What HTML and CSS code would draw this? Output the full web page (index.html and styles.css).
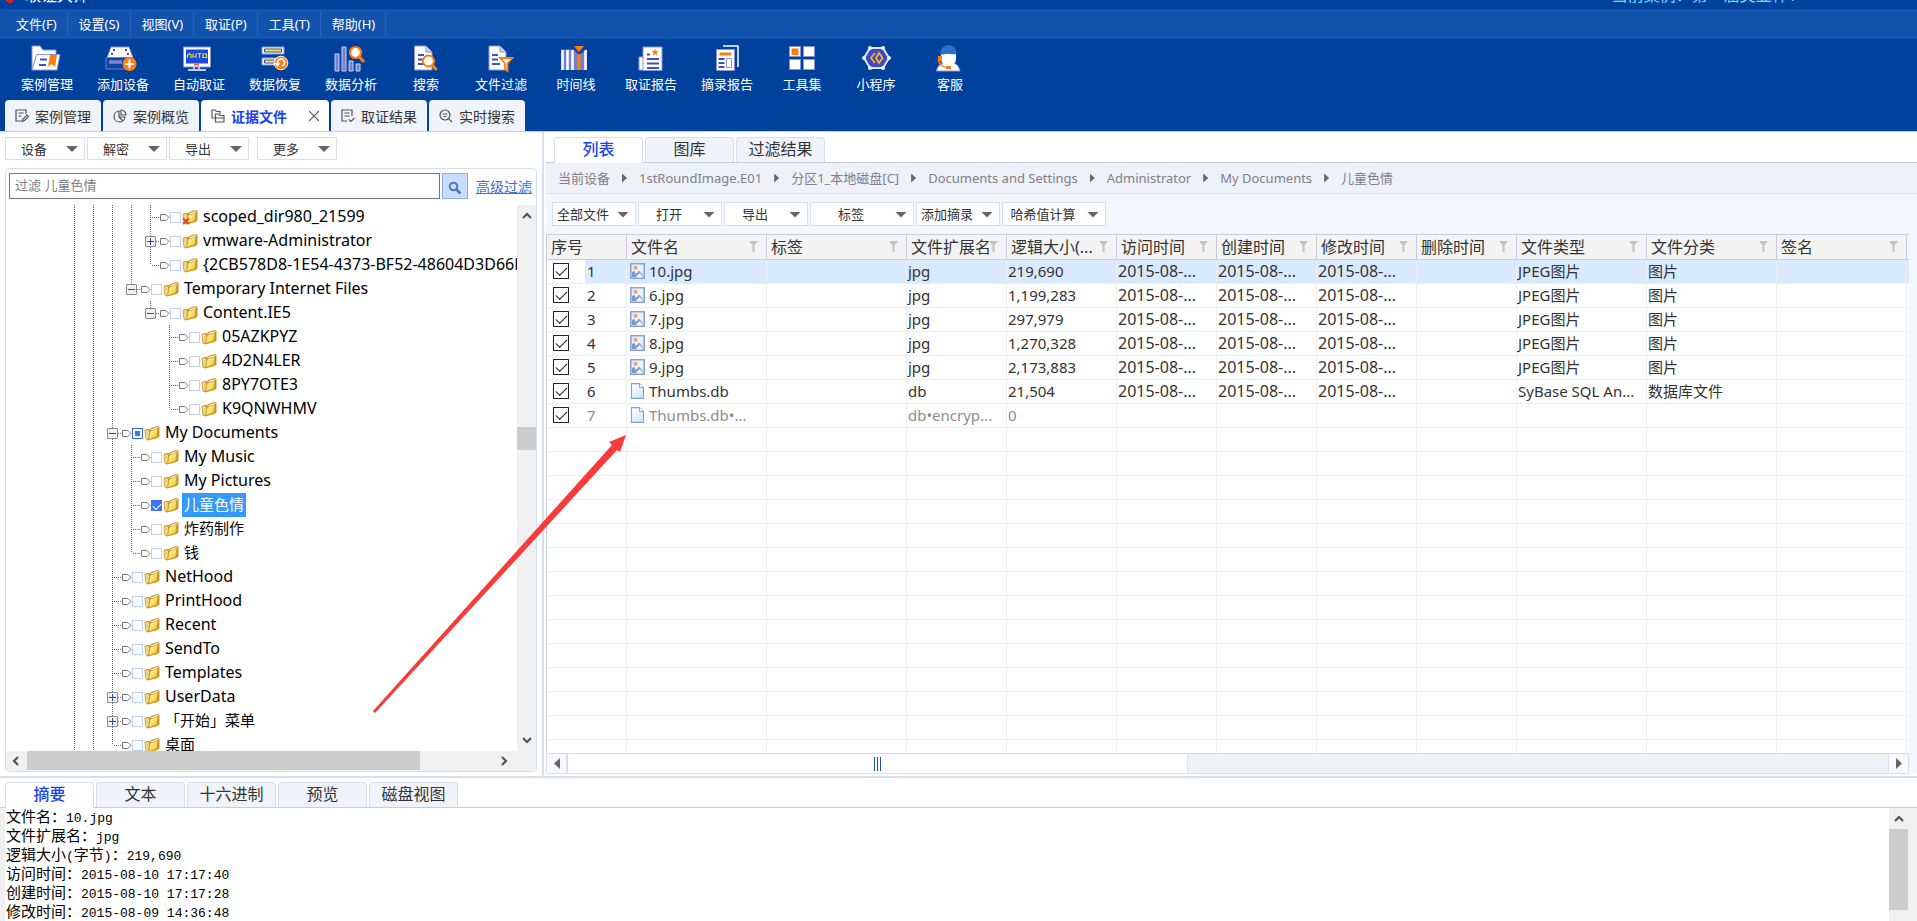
FILE: index.html
```html
<!DOCTYPE html>
<html lang="zh-CN">
<head>
<meta charset="utf-8">
<title>取证大师</title>
<link rel="stylesheet" href="styles.css">
</head>
<body>
<svg class="defs" aria-hidden="true">
  <defs>
    <linearGradient id="gold" x1="0" y1="0" x2="1" y2="1"><stop offset="0" stop-color="#fff8c8"/><stop offset=".5" stop-color="#f7e06a"/><stop offset="1" stop-color="#ecc010"/></linearGradient>
    <linearGradient id="sky" x1="0" y1="0" x2="1" y2="1"><stop offset="0" stop-color="#fff"/><stop offset="1" stop-color="#cfe3f7"/></linearGradient>
    <symbol id="folder" viewBox="0 0 16 16"><path d="M.5 5L4 3.800 6 4.500 7 3l6.500-2L15.500 2v9.500L13.500 13 4 15.500 1.500 14z" fill="#c9962a"/><path d="M1.300 5.500L4 4.800 5 6 4.500 14.300 2.300 13.600z" fill="#eed68a"/><path d="M7.500 4l6.500-2v1.500L7.500 5.500z" fill="#fffbe0"/><path d="M6 6.200L13.800 3.600 13 11.800 4.800 14.600z" fill="url(#gold)" stroke="#b98a1e" stroke-width=".5"/></symbol>
    <symbol id="folder-del" viewBox="0 0 16 16"><use href="#folder"/><path d="M1 9.500l6 5.500M7 9.500l-6 5.500" stroke="#e04a26" stroke-width="2.200"/></symbol>
    <symbol id="tag" viewBox="0 0 10 9"><path d="M.5 1.500h5.500l3 3-3 3H.5z" fill="#fff" stroke="#777"/></symbol>
    <symbol id="funnel" viewBox="0 0 9 11"><path d="M0 0h9L5.500 4.500V11h-2V4.500z" fill="#c2c2c2"/></symbol>
    <symbol id="pic" viewBox="0 0 15 16"><path d="M.8.8h13.400v14.400H.8z" fill="#e8f0fb" stroke="#8ba3d4" stroke-width="1.600"/><path d="M2 14V9l2-1 2 3 3-3.500 4 5V14z" fill="#7c9bd0"/><path d="M6 14l3.500-4 3.500 4z" fill="#fff"/><circle cx="5.500" cy="4.800" r="2" fill="#f0a070"/></symbol>
    <symbol id="doc" viewBox="0 0 15 16"><path d="M1.500.6h8l4 4v10.800h-12z" fill="url(#sky)" stroke="#79a6d6" stroke-width="1.100"/><path d="M9.500.6v4h4" fill="#fff" stroke="#79a6d6"/></symbol>
    <symbol id="up" viewBox="0 0 10 7"><path d="M1 6l4-4 4 4" fill="none" stroke="#555" stroke-width="2.200"/></symbol>
    <symbol id="down" viewBox="0 0 10 7"><path d="M1 1l4 4 4-4" fill="none" stroke="#555" stroke-width="2.200"/></symbol>
    <symbol id="left" viewBox="0 0 7 10"><path d="M6 1L2 5l4 4" fill="none" stroke="#555" stroke-width="2.200"/></symbol>
    <symbol id="right" viewBox="0 0 7 10"><path d="M1 1l4 4-4 4" fill="none" stroke="#555" stroke-width="2.200"/></symbol>
  </defs>
</svg>

<header class="top">
  <div class="titlebar">
    <svg class="logo" viewBox="0 0 10 4"><path d="M0 0h10L5 4z" fill="#d3202c"/></svg>
    <span class="app-name">取证大师</span>
    <span class="case-name">当前案例：第一届美亚杯1</span>
  </div>
  <nav class="menubar">
    <button>文件(F)</button><button>设置(S)</button><button>视图(V)</button><button>取证(P)</button><button>工具(T)</button><button>帮助(H)</button>
  </nav>
  <div class="toolbar">
    <button class="tool"><svg viewBox="0 0 30 28"><path d="M0 25V1h8l3 4h13v5" fill="#fff" stroke="#8a93dc"/><path d="M0 25L4.500 9.500H28L25 25z" fill="#fff" stroke="#8a93dc"/><path d="M8 14.500h7M7 20h7" stroke="#3a52d0" stroke-width="2"/><path d="M18 10h7l-2 12-3.500-3-3.500 3z" fill="#ff7d0a"/></svg>案例管理</button>
    <button class="tool"><svg viewBox="0 0 30 28"><path d="M3 2h18l4 11H-1z" fill="#fff" stroke="#8a93dc"/><path d="M5 5h2M17 5h2M3 9h2M19 9h2" stroke="#3a52d0" stroke-width="2"/><path d="M-2 12.500h26V24H-2z" fill="#12459f" stroke="#6f7ccc"/><path d="M1 17h13" stroke="#7d86d4" stroke-width="3.500"/><circle cx="21.500" cy="19" r="7" fill="#ff7d0a"/><path d="M21.500 14.500v9M17 19h9" stroke="#fff" stroke-width="2"/></svg>添加设备</button>
    <button class="tool"><svg viewBox="0 0 30 28"><path d="M-.5 2h27v20h-27z" fill="#fff" stroke="#8a93dc"/><path d="M2 4.500h22v14H2z" fill="#1a4be0"/><path d="M3.500 13v-3l2-1.500 1.500 1.500v3M9 8.500V12h3V8.500M13.500 8.500h4M15.500 8.500V13M19 9h3.500v3.500H19z" fill="none" stroke="#e4e032" stroke-width="1.200"/><path d="M10 19.500h5" stroke="#ff5a00" stroke-width="2"/><path d="M10 22v2.500M15 22v2.500M4 25h18" stroke="#c4caf2" stroke-width="1.800"/></svg>自动取证</button>
    <button class="tool"><svg viewBox="0 0 30 28"><path d="M2 2h22v7H2zM2 13h22v7H2z" fill="#fff" stroke="#8a93dc"/><path d="M4.500 4h17v3h-17zM4.500 15h10v3h-10z" fill="#f2ee3a" stroke="#3247a8"/><circle cx="21" cy="18" r="6.800" fill="#ff7d0a" stroke="#fff"/><path d="M17.500 20v-2.500a3.500 3.500 0 1 1 4.500 3.500M15.500 18l2 2.500 2-2.500" fill="none" stroke="#fff" stroke-width="1.700"/></svg>数据恢复</button>
    <button class="tool"><svg viewBox="0 0 30 28"><path d="M-1 9h4v17h-4zM6 2h4v24H6zM13 16h4v10h-4zM20 19h4v7h-4z" fill="#7580cc" stroke="#c9cdf3"/><circle cx="19.500" cy="7.500" r="5.500" fill="#fff" stroke="#ff7d0a" stroke-width="2.200"/><path d="M23.500 12l4.500 5" stroke="#ff7d0a" stroke-width="3"/></svg>数据分析</button>
    <button class="tool narrow"><svg viewBox="0 0 30 28"><path d="M3.500 1H15l6 6v18H3.500z" fill="#fff" stroke="#8a93dc"/><path d="M15 1v6h6" fill="#cdd3f5" stroke="#8a93dc"/><path d="M7 10h6M7 14.500h5M7 19h6" stroke="#3a52d0" stroke-width="1.800"/><circle cx="17.500" cy="16" r="5.500" fill="#fff" stroke="#ff7d0a" stroke-width="2"/><path d="M21.500 20l4 5" stroke="#ff7d0a" stroke-width="3"/></svg>搜索</button>
    <button class="tool"><svg viewBox="0 0 30 28"><path d="M3 1h11l6 6v18H3z" fill="#fff" stroke="#8a93dc"/><path d="M14 1v6h6" fill="#cdd3f5" stroke="#8a93dc"/><path d="M6 10h6M6 14.500h6M6 19h8" stroke="#3a52d0" stroke-width="1.800"/><path d="M14 13h12.500l-5 5.500V26l-2.500-1.500v-6z" fill="#fff" stroke="#ff7d0a" stroke-width="1.800"/></svg>文件过滤</button>
    <button class="tool narrow"><svg viewBox="0 0 30 28"><path d="M0 4.500h26v20.500H0z" fill="#7580cc"/><path d="M1.500 5v20M6.500 5v20M11.500 5v20M24.500 5v20" stroke="#fff" stroke-width="2.500"/><path d="M18 9v16" stroke="#ff7d0a" stroke-width="3"/><path d="M12 1h13v3l-5 5h-3l-5-5z" fill="#12459f"/><path d="M13 1h10l-5 6z" fill="#ff7d0a"/></svg>时间线</button>
    <button class="tool"><svg viewBox="0 0 30 28"><path d="M3 12h6v13H3z" fill="#fff" stroke="#8a93dc"/><path d="M7 2h19v23.500H7z" fill="#fff" stroke="#8a93dc"/><path d="M19 3.500l1 2.500h2.500l-2 1.800.8 2.600-2.300-1.500-2.300 1.500.8-2.600-2-1.800H18z" fill="#ff7d0a"/><path d="M11 9.500h3M11 14h12M11 18.500h12M11 23h12" stroke="#3a52d0" stroke-width="1.800"/></svg>取证报告</button>
    <button class="tool"><svg viewBox="0 0 30 28"><path d="M11 1h15v21" fill="none" stroke="#fff" stroke-width="1.500"/><path d="M4.500 4.500h18v21h-18z" fill="#fff" stroke="#8a93dc"/><path d="M7.500 9h12" stroke="#ff7d0a" stroke-width="3"/><path d="M6.500 14h6M6.500 18h6M6.500 22h6" stroke="#3a52d0" stroke-width="1.800"/><path d="M14.500 13.500h5v9h-5z" fill="#fff" stroke="#8a93dc"/></svg>摘录报告</button>
    <button class="tool narrow"><svg viewBox="0 0 30 28"><path d="M2.500 1.500h11v10h-11zM16.500 1.500h11v10h-11zM2.500 14.500h11v10h-11zM16.500 14.500h11v10h-11z" fill="#fff" stroke="#8a93dc"/><path d="M4.500 3.500h7v6.500h-7z" fill="#ff7d0a"/></svg>工具集</button>
    <button class="tool narrow"><svg viewBox="0 0 30 28"><path d="M9 3h13l6 10-6 10H9L3 13z" fill="#3a48cf" stroke="#dfe9ff" stroke-width="2"/><g fill="#e6fbff"><circle cx="9" cy="3" r="2"/><circle cx="22" cy="3" r="2"/><circle cx="28" cy="13" r="2"/><circle cx="22" cy="23" r="2"/><circle cx="9" cy="23" r="2"/><circle cx="3" cy="13" r="2"/></g><path d="M14 8l-4 5 4 5M18 8l-3 5 3 5 3.500-5z" fill="none" stroke="#ffb01a" stroke-width="1.800"/></svg>小程序</button>
    <button class="tool narrow"><svg viewBox="0 0 30 28"><path d="M1.500 26c1-6 5-7.500 7.500-8h9c3 .5 6 3 7 8z" fill="#fff" stroke="#8a93dc"/><path d="M6 8h15v6c0 4-3 6-7.500 6S6 18 6 14z" fill="#fff"/><path d="M5.500 10C5 3.500 9 0 13.500 0S22 3.500 21.500 9c-6 1-9-1-16 1z" fill="#2f6fc8"/><path d="M3.500 14c0 6 5 8.500 9 8.500" fill="none" stroke="#ff7d0a" stroke-width="1.500"/><path d="M3 11h4v5H3zM11 21h5v3h-5z" fill="#ff7d0a"/></svg>客服</button>
  </div>
  <nav class="page-tabs">
    <button class="page-tab"><svg viewBox="0 0 14 14"><path d="M11 5V1H1v11h5M3.500 4h5M3.500 7h3M7 12.500l1-2.500 4-4 1.500 1.500-4 4z"/></svg>案例管理</button>
    <button class="page-tab"><svg viewBox="0 0 14 14"><path d="M6 2a5.500 5.500 0 1 0 6 6H6zM8 1v5h5a5 5 0 0 0-5-5zM6 8l4 4"/></svg>案例概览</button>
    <button class="page-tab current"><svg viewBox="0 0 14 14"><path d="M4 9H1V1h3l1.500 1.500H9V5M4.500 5h3L9 6.500h4V13H4.500zM4.500 9H13"/></svg><span>证据文件</span><svg class="close" viewBox="0 0 10 10"><path d="M0 0l10 10M10 0L0 10"/></svg></button>
    <button class="page-tab"><svg viewBox="0 0 14 14"><path d="M11 7V1H1v11h5M3.500 4h5M3.500 7h5M8 10.500l2 2 3.500-3.500"/></svg>取证结果</button>
    <button class="page-tab"><svg viewBox="0 0 14 14"><circle cx="6" cy="6" r="5"/><path d="M9.500 9.500L13 13M3.500 5h5M4.500 7.500h3"/></svg>实时搜索</button>
  </nav>
</header>

<main class="work">
  <section class="left">
    <div class="actions">
      <button class="drop"><span>设备</span></button><button class="drop"><span>解密</span></button><button class="drop"><span>导出</span></button><button class="drop spaced"><span>更多</span></button>
    </div>
    <div class="panel">
      <form class="filter">
        <input class="filter-box" type="text" placeholder="过滤 儿童色情" aria-label="过滤">
        <button class="filter-go" type="button" aria-label="搜索"><svg viewBox="0 0 14 14"><circle cx="5.500" cy="5.500" r="3.800" fill="none" stroke="#5079b8" stroke-width="2"/><path d="M8.500 8.500l4 4" stroke="#5079b8" stroke-width="2.600"/></svg></button>
        <a class="advanced" href="#advanced">高级过滤</a>
      </form>
      <div class="tree-area">
        <ul class="tree">
          <li><i class="v"></i><i class="v"></i><i class="v"></i><i class="v"></i><i class="v t"></i><svg class="tag"><use href="#tag"/></svg><input type="checkbox" id="n1"><svg class="fold"><use href="#folder-del"/></svg><label for="n1">scoped_dir980_21599</label></li>
          <li><i class="v"></i><i class="v"></i><i class="v"></i><i class="v"></i><i class="v t"><b class="plus"></b></i><svg class="tag"><use href="#tag"/></svg><input type="checkbox" id="n2"><svg class="fold"><use href="#folder"/></svg><label for="n2">vmware-Administrator</label></li>
          <li><i class="v"></i><i class="v"></i><i class="v"></i><i class="v"></i><i class="v t end"></i><svg class="tag"><use href="#tag"/></svg><input type="checkbox" id="n3"><svg class="fold"><use href="#folder"/></svg><label for="n3">{2CB578D8-1E54-4373-BF52-48604D3D66E0}</label></li>
          <li><i class="v"></i><i class="v"></i><i class="v"></i><i class="v t end"><b></b></i><svg class="tag"><use href="#tag"/></svg><input type="checkbox" id="n4"><svg class="fold"><use href="#folder"/></svg><label for="n4">Temporary Internet Files</label></li>
          <li><i class="v"></i><i class="v"></i><i class="v"></i><i></i><i class="v t end"><b></b></i><svg class="tag"><use href="#tag"/></svg><input type="checkbox" id="n5"><svg class="fold"><use href="#folder"/></svg><label for="n5">Content.IE5</label></li>
          <li><i class="v"></i><i class="v"></i><i class="v"></i><i></i><i></i><i class="v t"></i><svg class="tag"><use href="#tag"/></svg><input type="checkbox" id="n6"><svg class="fold"><use href="#folder"/></svg><label for="n6">05AZKPYZ</label></li>
          <li><i class="v"></i><i class="v"></i><i class="v"></i><i></i><i></i><i class="v t"></i><svg class="tag"><use href="#tag"/></svg><input type="checkbox" id="n7"><svg class="fold"><use href="#folder"/></svg><label for="n7">4D2N4LER</label></li>
          <li><i class="v"></i><i class="v"></i><i class="v"></i><i></i><i></i><i class="v t"></i><svg class="tag"><use href="#tag"/></svg><input type="checkbox" id="n8"><svg class="fold"><use href="#folder"/></svg><label for="n8">8PY7OTE3</label></li>
          <li><i class="v"></i><i class="v"></i><i class="v"></i><i></i><i></i><i class="v t end"></i><svg class="tag"><use href="#tag"/></svg><input type="checkbox" id="n9"><svg class="fold"><use href="#folder"/></svg><label for="n9">K9QNWHMV</label></li>
          <li><i class="v"></i><i class="v"></i><i class="v t"><b></b></i><svg class="tag"><use href="#tag"/></svg><input class="partial" type="checkbox" id="n10"><svg class="fold"><use href="#folder"/></svg><label for="n10">My Documents</label></li>
          <li><i class="v"></i><i class="v"></i><i class="v"></i><i class="v t"></i><svg class="tag"><use href="#tag"/></svg><input type="checkbox" id="n11"><svg class="fold"><use href="#folder"/></svg><label for="n11">My Music</label></li>
          <li><i class="v"></i><i class="v"></i><i class="v"></i><i class="v t"></i><svg class="tag"><use href="#tag"/></svg><input type="checkbox" id="n12"><svg class="fold"><use href="#folder"/></svg><label for="n12">My Pictures</label></li>
          <li class="han picked"><i class="v"></i><i class="v"></i><i class="v"></i><i class="v t"></i><svg class="tag"><use href="#tag"/></svg><input type="checkbox" id="n13" checked><svg class="fold"><use href="#folder"/></svg><label for="n13">儿童色情</label></li>
          <li class="han"><i class="v"></i><i class="v"></i><i class="v"></i><i class="v t"></i><svg class="tag"><use href="#tag"/></svg><input type="checkbox" id="n14"><svg class="fold"><use href="#folder"/></svg><label for="n14">炸药制作</label></li>
          <li class="han"><i class="v"></i><i class="v"></i><i class="v"></i><i class="v t end"></i><svg class="tag"><use href="#tag"/></svg><input type="checkbox" id="n15"><svg class="fold"><use href="#folder"/></svg><label for="n15">钱</label></li>
          <li><i class="v"></i><i class="v"></i><i class="v t"></i><svg class="tag"><use href="#tag"/></svg><input type="checkbox" id="n16"><svg class="fold"><use href="#folder"/></svg><label for="n16">NetHood</label></li>
          <li><i class="v"></i><i class="v"></i><i class="v t"></i><svg class="tag"><use href="#tag"/></svg><input type="checkbox" id="n17"><svg class="fold"><use href="#folder"/></svg><label for="n17">PrintHood</label></li>
          <li><i class="v"></i><i class="v"></i><i class="v t"></i><svg class="tag"><use href="#tag"/></svg><input type="checkbox" id="n18"><svg class="fold"><use href="#folder"/></svg><label for="n18">Recent</label></li>
          <li><i class="v"></i><i class="v"></i><i class="v t"></i><svg class="tag"><use href="#tag"/></svg><input type="checkbox" id="n19"><svg class="fold"><use href="#folder"/></svg><label for="n19">SendTo</label></li>
          <li><i class="v"></i><i class="v"></i><i class="v t"></i><svg class="tag"><use href="#tag"/></svg><input type="checkbox" id="n20"><svg class="fold"><use href="#folder"/></svg><label for="n20">Templates</label></li>
          <li><i class="v"></i><i class="v"></i><i class="v t"><b class="plus"></b></i><svg class="tag"><use href="#tag"/></svg><input type="checkbox" id="n21"><svg class="fold"><use href="#folder"/></svg><label for="n21">UserData</label></li>
          <li class="han"><i class="v"></i><i class="v"></i><i class="v t"><b class="plus"></b></i><svg class="tag"><use href="#tag"/></svg><input type="checkbox" id="n22"><svg class="fold"><use href="#folder"/></svg><label for="n22">「开始」菜单</label></li>
          <li class="han"><i class="v"></i><i class="v"></i><i class="v t end"></i><svg class="tag"><use href="#tag"/></svg><input type="checkbox" id="n23"><svg class="fold"><use href="#folder"/></svg><label for="n23">桌面</label></li>
        </ul>
        <div class="vbar"><button aria-label="向上"><svg class="chev-v"><use href="#up"/></svg></button><div class="vtrack"><div class="vthumb"></div></div><button aria-label="向下"><svg class="chev-v"><use href="#down"/></svg></button></div>
      </div>
      <div class="hbar"><button aria-label="向左"><svg class="chev-h"><use href="#left"/></svg></button><div class="htrack"><div class="hthumb"></div></div><button aria-label="向右"><svg class="chev-h"><use href="#right"/></svg></button></div>
    </div>
  </section>

  <section class="right">
    <nav class="tabs">
      <button class="tab current">列表</button><button class="tab">图库</button><button class="tab">过滤结果</button>
    </nav>
    <nav class="crumbs">
      <a href="#c1">当前设备</a><a href="#c2">1stRoundImage.E01</a><a href="#c3">分区1_本地磁盘[C]</a><a href="#c4">Documents and Settings</a><a href="#c5">Administrator</a><a href="#c6">My Documents</a><a href="#c7">儿童色情</a>
    </nav>
    <div class="list-actions">
      <button class="drop"><span>全部文件</span></button><button class="drop"><span>打开</span></button><button class="drop"><span>导出</span></button><button class="drop wide"><span>标签</span></button><button class="drop"><span>添加摘录</span></button><button class="drop wide"><span>哈希值计算</span></button>
    </div>
    <div class="grid-area">
      <table class="files">
        <colgroup><col class="c80"><col class="c140"><col class="c140"><col class="c100"><col class="c110"><col class="c100"><col class="c100"><col class="c100"><col class="c100"><col class="c130"><col class="c130"><col class="c130"><col></colgroup>
        <thead><tr>
          <th>序号</th>
          <th>文件名<svg class="fun"><use href="#funnel"/></svg></th>
          <th>标签<svg class="fun"><use href="#funnel"/></svg></th>
          <th>文件扩展名<svg class="fun"><use href="#funnel"/></svg></th>
          <th>逻辑大小(...<svg class="fun"><use href="#funnel"/></svg></th>
          <th>访问时间<svg class="fun"><use href="#funnel"/></svg></th>
          <th>创建时间<svg class="fun"><use href="#funnel"/></svg></th>
          <th>修改时间<svg class="fun"><use href="#funnel"/></svg></th>
          <th>删除时间<svg class="fun"><use href="#funnel"/></svg></th>
          <th>文件类型<svg class="fun"><use href="#funnel"/></svg></th>
          <th>文件分类<svg class="fun"><use href="#funnel"/></svg></th>
          <th>签名<svg class="fun"><use href="#funnel"/></svg></th>
          <th></th>
        </tr></thead>
        <tbody>
          <tr class="active"><td><label class="num"><input type="checkbox" checked>1</label></td><td><span class="name"><svg><use href="#pic"/></svg>10.jpg</span></td><td></td><td>jpg</td><td>219,690</td><td class="date">2015-08-...</td><td class="date">2015-08-...</td><td class="date">2015-08-...</td><td></td><td>JPEG图片</td><td>图片</td><td></td><td></td></tr>
          <tr><td><label class="num"><input type="checkbox" checked>2</label></td><td><span class="name"><svg><use href="#pic"/></svg>6.jpg</span></td><td></td><td>jpg</td><td>1,199,283</td><td class="date">2015-08-...</td><td class="date">2015-08-...</td><td class="date">2015-08-...</td><td></td><td>JPEG图片</td><td>图片</td><td></td><td></td></tr>
          <tr><td><label class="num"><input type="checkbox" checked>3</label></td><td><span class="name"><svg><use href="#pic"/></svg>7.jpg</span></td><td></td><td>jpg</td><td>297,979</td><td class="date">2015-08-...</td><td class="date">2015-08-...</td><td class="date">2015-08-...</td><td></td><td>JPEG图片</td><td>图片</td><td></td><td></td></tr>
          <tr><td><label class="num"><input type="checkbox" checked>4</label></td><td><span class="name"><svg><use href="#pic"/></svg>8.jpg</span></td><td></td><td>jpg</td><td>1,270,328</td><td class="date">2015-08-...</td><td class="date">2015-08-...</td><td class="date">2015-08-...</td><td></td><td>JPEG图片</td><td>图片</td><td></td><td></td></tr>
          <tr><td><label class="num"><input type="checkbox" checked>5</label></td><td><span class="name"><svg><use href="#pic"/></svg>9.jpg</span></td><td></td><td>jpg</td><td>2,173,883</td><td class="date">2015-08-...</td><td class="date">2015-08-...</td><td class="date">2015-08-...</td><td></td><td>JPEG图片</td><td>图片</td><td></td><td></td></tr>
          <tr><td><label class="num"><input type="checkbox" checked>6</label></td><td><span class="name"><svg><use href="#doc"/></svg>Thumbs.db</span></td><td></td><td>db</td><td>21,504</td><td class="date">2015-08-...</td><td class="date">2015-08-...</td><td class="date">2015-08-...</td><td></td><td>SyBase SQL An...</td><td>数据库文件</td><td></td><td></td></tr>
          <tr class="dim"><td><label class="num"><input type="checkbox" checked>7</label></td><td><span class="name"><svg><use href="#doc"/></svg>Thumbs.db•...</span></td><td></td><td>db•encryp...</td><td>0</td><td></td><td></td><td></td><td></td><td></td><td></td><td></td><td></td></tr>
          <tr><td><td><td><td><td><td><td><td><td><td><td><td><td></tr>
          <tr><td><td><td><td><td><td><td><td><td><td><td><td><td></tr>
          <tr><td><td><td><td><td><td><td><td><td><td><td><td><td></tr>
          <tr><td><td><td><td><td><td><td><td><td><td><td><td><td></tr>
          <tr><td><td><td><td><td><td><td><td><td><td><td><td><td></tr>
          <tr><td><td><td><td><td><td><td><td><td><td><td><td><td></tr>
          <tr><td><td><td><td><td><td><td><td><td><td><td><td><td></tr>
          <tr><td><td><td><td><td><td><td><td><td><td><td><td><td></tr>
          <tr><td><td><td><td><td><td><td><td><td><td><td><td><td></tr>
          <tr><td><td><td><td><td><td><td><td><td><td><td><td><td></tr>
          <tr><td><td><td><td><td><td><td><td><td><td><td><td><td></tr>
          <tr><td><td><td><td><td><td><td><td><td><td><td><td><td></tr>
          <tr><td><td><td><td><td><td><td><td><td><td><td><td><td></tr>
          <tr><td><td><td><td><td><td><td><td><td><td><td><td><td></tr>
        </tbody>
      </table>
    </div>
    <div class="list-scroll">
      <button aria-label="向左"><svg viewBox="0 0 6 11"><path d="M6 0v11L0 5.500z" fill="#666"/></svg></button>
      <div class="list-track"><div class="list-thumb"><i></i><i></i><i></i></div></div>
      <button aria-label="向右"><svg viewBox="0 0 6 11"><path d="M0 0v11l6-5.500z" fill="#666"/></svg></button>
    </div>
  </section>
</main>

<section class="bottom">
  <nav class="tabs">
    <button class="tab current">摘要</button><button class="tab">文本</button><button class="tab">十六进制</button><button class="tab">预览</button><button class="tab">磁盘视图</button>
  </nav>
  <div class="summary">
    <div class="lines">
      <p>文件名：<code>10.jpg</code></p>
      <p>文件扩展名：<code>jpg</code></p>
      <p>逻辑大小<code>(</code>字节<code>)</code>：<code>219,690</code></p>
      <p>访问时间：<code>2015-08-10 17:17:40</code></p>
      <p>创建时间：<code>2015-08-10 17:17:28</code></p>
      <p>修改时间：<code>2015-08-09 14:36:48</code></p>
    </div>
    <div class="vbar"><button aria-label="向上"><svg class="chev-v"><use href="#up"/></svg></button><div class="vtrack"><div class="vthumb"></div></div></div>
  </div>
</section>

<svg class="pointer" width="640" height="720" aria-hidden="true"><path d="M373 711L612 445 609 442 626 435 620 452 617 450 375 713z" fill="#f93a3a"/></svg>
</body>
</html>
```
FILE: styles.css
```css
* { box-sizing: border-box; }
body {
  margin: 0;
  height: 100vh;
  display: flex;
  flex-direction: column;
  overflow: hidden;
  background: #fff;
  color: #333;
  font-family: "Noto Sans", "Noto Sans CJK SC", sans-serif;
  font-size: 15px;
}
button { font: inherit; color: inherit; background: none; border: 0; padding: 0; margin: 0; }
ul, p { margin: 0; padding: 0; }
.defs { position: absolute; width: 0; height: 0; }

/* header */
.top { flex: none; background: #00419d; color: #fff; border-bottom: 1px solid #c8cce0; }
.titlebar { height: 9px; overflow: hidden; display: flex; align-items: flex-start; font-size: 16px; padding: 0 120px 0 5px; }
.titlebar span { line-height: 16px; margin-top: -13px; }
.logo { width: 10px; height: 4px; margin-right: 10px; }
.case-name { margin-left: auto; color: #6fe0ff; }
.menubar { height: 30px; background: #1253ae; display: flex; align-items: center; padding-left: 5px; font-size: 13px; }
.menubar button { height: 26px; padding: 0 10px 0 11px; border-right: 1px solid #2564bb; line-height: 24px; }
.toolbar { height: 61px; display: flex; padding: 6px 0 0 9px; font-size: 13px; }
.tool { width: 76px; display: flex; flex-direction: column; align-items: center; gap: 2px; line-height: 18px; }
.tool.narrow { width: 74px; }
.tool svg { width: 30px; height: 28px; overflow: visible; }
.page-tabs { display: flex; gap: 2px; padding-left: 5px; font-size: 14px; color: #333; }
.page-tab { width: 96px; height: 31px; background: #f0f3f9; border-radius: 4px 4px 0 0; display: flex; align-items: center; gap: 6px; padding-left: 10px; }
.page-tab svg { width: 14px; height: 14px; fill: none; stroke: #555; stroke-width: 1.200; }
.page-tab.current { width: 128px; background: #fff; color: #1b44f0; font-weight: bold; }
.page-tab .close { width: 10px; height: 10px; margin-left: 16px; }

/* work area */
.work { flex: 1; min-height: 0; display: flex; border-bottom: 2px solid #d5dff0; }
.left { flex: none; width: 544px; padding: 5px 5px 4px; display: flex; flex-direction: column; gap: 8px; border-right: 2px solid #d5dff0; }
.actions { display: flex; gap: 2px; }
.drop { width: 80px; height: 23px; border: 1px solid #d5dff0; background: #fff; font-size: 13px; line-height: 18px; display: flex; align-items: center; }
.drop span { flex: 1; text-align: center; white-space: nowrap; }
.drop::after { content: ""; width: 12px; height: 6px; margin: 1px 6px 0 4px; background: #666; clip-path: polygon(0 0, 100% 0, 50% 100%); }
.drop.spaced { margin-left: 6px; }
.panel { flex: 1; min-height: 0; width: 532px; border: 1px solid #d5dff0; border-radius: 4px; display: flex; flex-direction: column; }
.filter { display: flex; align-items: center; padding: 4px 2px 6px 3px; }
.filter-box { flex: 1; min-width: 0; height: 26px; border: 1px solid #777; padding: 0 5px 2px; font: 13px "Noto Sans", "Noto Sans CJK SC", sans-serif; }
.filter-box::placeholder { color: #808080; }
.filter-go { width: 26px; height: 26px; margin: 0 8px 0 2px; border: 1px solid #90b0dc; background: #c8deff; }
.filter-go svg { width: 14px; height: 14px; vertical-align: middle; }
.advanced { font-size: 14px; color: #3b6fd8; margin-right: 2px; }

.tree-area { flex: 1; min-height: 0; display: flex; }
.tree { flex: 1; min-width: 0; list-style: none; padding-left: 59px; overflow: hidden; color: #000; font-size: 16px; }
.tree li { height: 24px; display: flex; align-items: center; white-space: nowrap; }
.tree .han { font-size: 15px; }
.tree i { flex: none; width: 19px; height: 24px; position: relative; }
.tree .v::before { content: ""; position: absolute; left: 9px; top: 0; bottom: 0; width: 1px; background: repeating-linear-gradient(180deg, #666 0 1px, #fff 1px 2px); }
.tree .end::before { bottom: 12px; }
.tree .t::after { content: ""; position: absolute; left: 10px; right: 0; top: 12px; height: 1px; background: repeating-linear-gradient(90deg, #fff 0 1px, #666 1px 2px); }
.tree b { position: absolute; z-index: 1; left: 4px; top: 7px; width: 11px; height: 11px; border: 1px solid #8a8a8a; border-radius: 1px; background: linear-gradient(#2a4c9c, #2a4c9c) center / 7px 1px no-repeat, #f0f0f0; }
.tree .plus { background: linear-gradient(#2a4c9c, #2a4c9c) center / 7px 1px no-repeat, linear-gradient(#2a4c9c, #2a4c9c) center / 1px 7px no-repeat, #f0f0f0; }
.tag { flex: none; width: 10px; height: 9px; }
.tree input { appearance: none; flex: none; width: 11px; height: 11px; margin: 0 1px 0 0; border: 1px solid #bcd0f8; background: #fff; display: grid; place-items: center; }
.tree input.partial { border-color: #2f66ea; }
.tree input.partial::before { content: ""; width: 5px; height: 5px; background: #3d74f5; }
.tree input:checked { background: #3d74f5; border-color: #3d74f5; }
.tree input:checked::before { content: ""; width: 7px; height: 4px; border: solid #fff; border-width: 0 0 1px 1px; transform: rotate(-45deg); }
.fold { flex: none; width: 16px; height: 16px; margin-right: 3px; }
.tree label { line-height: 22px; padding: 0 2px 2px; }
.picked label { background: #3399ff; color: #fff; }

.vbar { flex: none; width: 19px; background: #f0f0f0; display: flex; flex-direction: column; }
.vbar button { height: 21px; }
.vtrack { flex: 1; }
.vthumb { height: 23px; margin-top: 201px; background: #cdcdcd; }
.chev-v { width: 10px; height: 7px; display: block; margin: auto; }
.chev-h { width: 7px; height: 10px; display: block; margin: auto; }
.hbar { flex: none; height: 20px; background: #f0f0f0; display: flex; padding-right: 20px; }
.hbar button { width: 21px; padding-right: 2px; }
.htrack { flex: 1; }
.hthumb { height: 19px; width: 393px; background: #cdcdcd; }

/* file list */
.right { flex: 1; min-width: 0; display: flex; flex-direction: column; padding: 5px 0 2px 2px; }
.tabs { flex: none; display: flex; gap: 2px; padding-left: 8px; border-bottom: 1px solid #c8cce0; font-size: 16px; }
.tab { width: 89px; height: 25px; line-height: 22px; padding-bottom: 2px; background: #f0f3f9; border: 1px solid #d5dff0; border-bottom: 0; border-radius: 4px 4px 0 0; }
.tab.current { background: #fff; color: #1b44f0; font-weight: 500; margin-bottom: -1px; height: 26px; padding-bottom: 3px; }
.crumbs { flex: none; height: 31px; background: #eef1f7; border-bottom: 1px solid #d5dff0; display: flex; align-items: center; padding-left: 12px; font-size: 13px; }
.crumbs a { color: #80808a; text-decoration: none; line-height: 28px; white-space: nowrap; display: flex; align-items: center; }
.crumbs a + a::before { content: ""; width: 5px; height: 9px; margin: 0 12px; background: #666; clip-path: polygon(0 0, 100% 50%, 0 100%); }
.list-actions { flex: none; display: flex; gap: 2px; padding: 8px 6px; background: #f3f6fb; }
.list-actions .drop { width: 84px; height: 24px; }
.list-actions .wide { width: 104px; }
.grid-area { flex: 1; min-height: 0; overflow: hidden; padding-right: 8px; background: #f3f6fb; }
.files { width: 100%; table-layout: fixed; border-spacing: 0; border-left: 1px solid #c8cce0; background: #fff; }
.c80 { width: 80px; }
.c100 { width: 100px; }
.c110 { width: 110px; }
.c130 { width: 130px; }
.c140 { width: 140px; }
.files th { height: 26px; padding: 0 0 0 4px; font-size: 16px; font-weight: normal; line-height: 22px; text-align: left; white-space: nowrap; background: #f3f3f4; border: solid #c8cce0; border-width: 1px 1px 1px 0; position: relative; }
.files td { height: 24px; padding: 0 0 1px 1px; line-height: 22px; white-space: nowrap; border: solid #eee; border-width: 0 1px 1px 0; overflow: hidden; }
.files .date { font-size: 16px; }
.files th:last-child, .files td:last-child { padding: 0; border-right: 0; }
.fun { position: absolute; right: 8px; top: 6px; width: 9px; height: 11px; }
.num { display: flex; align-items: center; gap: 18px; padding-left: 5px; }
.num input { appearance: none; width: 16px; height: 16px; margin: 0; border: 1px solid #222; background: #fff; display: grid; place-items: center; }
.num input::before { content: ""; width: 10px; height: 5px; margin-top: -3px; border: solid #222; border-width: 0 0 1px 1px; transform: rotate(-45deg); }
.name { display: flex; align-items: center; gap: 4px; padding-left: 2px; }
.name svg { width: 15px; height: 16px; }
.active td { background: #d9e9ff; }
.active td:first-child { background: linear-gradient(90deg, #fff 38px, #d9e9ff 38px); }
.dim td { color: #8c8c8c; }

.list-scroll { flex: none; height: 21px; display: flex; padding-right: 8px; background: #f3f6fb; }
.list-scroll button { width: 21px; border: 1px solid #d5dff0; background: #f8f9fc; display: grid; place-items: center; }
.list-scroll svg { width: 6px; height: 11px; }
.list-track { flex: 1; background: #eef1f6; border: solid #d5dff0; border-width: 1px 0; }
.list-thumb { width: 47%; height: 19px; background: #fff; border: solid #d5dff0; border-width: 0 1px; display: flex; justify-content: center; align-items: center; gap: 2px; }
.list-thumb i { width: 1px; height: 14px; background: #1b55a5; }

/* summary */
.bottom { flex: none; height: 143px; padding-top: 4px; display: flex; flex-direction: column; }
.bottom .tabs { padding-left: 5px; }
.summary { flex: 1; min-height: 0; display: flex; overflow: hidden; border-left: 5px solid #f0f0f0; }
.lines { flex: 1; padding: 0 1px; color: #000; font-family: "Noto Sans CJK SC", sans-serif; }
.lines p { line-height: 15px; height: 19px; white-space: pre; }
.lines code { font: 13px "Liberation Mono", monospace; }
.summary .vbar { width: 28px; padding-right: 9px; }
.summary .vthumb { height: 81px; margin-top: 0; }

.pointer { position: absolute; left: 0; top: 0; pointer-events: none; }
```
